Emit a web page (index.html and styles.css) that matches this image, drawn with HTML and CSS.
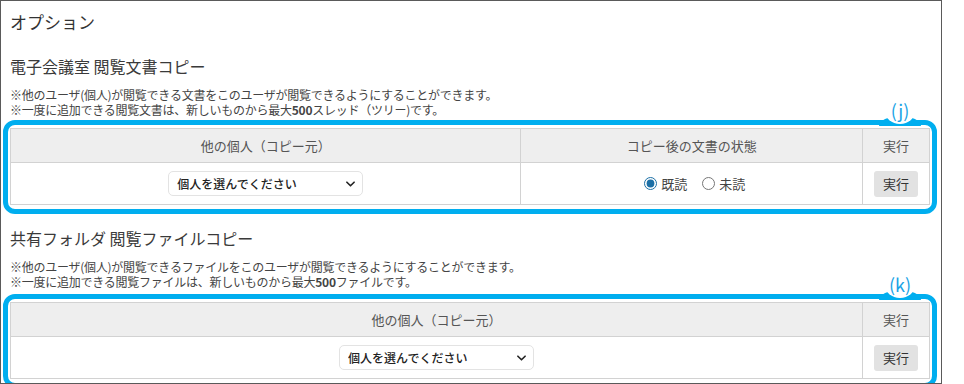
FILE: index.html
```html
<!DOCTYPE html>
<html lang="ja">
<head>
<meta charset="utf-8" />
<title>オプション</title>
<link rel="stylesheet" href="styles.css">
</head>
<body>
<div class="frame">
  <h1 class="page-title">オプション</h1>

  <!-- 電子会議室 -->
  <h2 class="sec-title">電子会議室 閲覧文書コピー</h2>
  <div class="note">
    <div>※他のユーザ(個人)が閲覧できる文書をこのユーザが閲覧できるようにすることができます。</div>
    <div>※一度に追加できる閲覧文書は、新しいものから最大<b>500</b>スレッド（ツリー)です。</div>
  </div>
  <div class="callout">
    <span class="tag">(j)</span>
    <table class="opt-table">
      <tr>
        <th class="c-src">他の個人（コピー元）</th>
        <th class="c-state">コピー後の文書の状態</th>
        <th class="c-run">実行</th>
      </tr>
      <tr>
        <td>
          <div class="sel">
            <select><option>個人を選んでください</option></select>
            <svg class="chev" viewBox="0 0 10 6" width="9" height="6"><polyline points="1,1 5,5 9,1" fill="none" stroke="#222" stroke-width="1.8" stroke-linecap="round" stroke-linejoin="round"/></svg>
          </div>
        </td>
        <td>
          <div class="radios">
            <label><input type="radio" name="st1" checked> 既読</label>
            <label><input type="radio" name="st1"> 未読</label>
          </div>
        </td>
        <td><button class="btn">実行</button></td>
      </tr>
    </table>
  </div>

  <!-- 共有フォルダ -->
  <h2 class="sec-title second">共有フォルダ 閲覧ファイルコピー</h2>
  <div class="note">
    <div>※他のユーザ(個人)が閲覧できるファイルをこのユーザが閲覧できるようにすることができます。</div>
    <div>※一度に追加できる閲覧ファイルは、新しいものから最大<b>500</b>ファイルです。</div>
  </div>
  <div class="callout second">
    <span class="tag">(k)</span>
    <table class="opt-table">
      <tr>
        <th>他の個人（コピー元）</th>
        <th class="c-run">実行</th>
      </tr>
      <tr>
        <td>
          <div class="sel">
            <select><option>個人を選んでください</option></select>
            <svg class="chev" viewBox="0 0 10 6" width="9" height="6"><polyline points="1,1 5,5 9,1" fill="none" stroke="#222" stroke-width="1.8" stroke-linecap="round" stroke-linejoin="round"/></svg>
          </div>
        </td>
        <td><button class="btn">実行</button></td>
      </tr>
    </table>
  </div>
</div>
</body>
</html>
```

FILE: styles.css
```css
:root{--blue:#00aeef;--line:#d2d2d2;--txt:#333}
html,body{margin:0;background:#fff;color:var(--txt);font-family:"Noto Sans CJK JP","Noto Sans",sans-serif}

/* 外枠 */
.frame{width:942px;height:384px;box-sizing:border-box;border:1px solid #5a5a5a;padding:8px 0 0 9px;overflow:hidden}

.page-title{margin:0;font-size:17px;font-weight:400;line-height:26px;color:#333}
.sec-title{margin:20px 0 0;font-size:16px;font-weight:400;line-height:22px;color:#3a3a3a}
.sec-title.second{margin-top:13px}
.note{margin:10px 0 0;font-size:12px;line-height:15px;color:#444;letter-spacing:-.25px}
.note div{height:15px}
.note b{font-weight:700}

/* 青い囲み（注釈） */
.callout{position:relative;margin:3px 0 0 -7px;width:934px;box-sizing:border-box;border:5px solid var(--blue);border-radius:12px;padding:3px 2px 4px}
.callout.second{margin-top:5px}
.tag{position:absolute;right:17px;top:-26px;width:30px;height:22px;line-height:22px;text-align:center;font-size:18px;color:#1aa3e6;z-index:2}
.tag::before{content:'';position:absolute;left:-6px;right:-6px;top:17px;height:10px;background:var(--blue);border-radius:50% 50% 0 0/100% 100% 0 0;z-index:-2}
.tag::after{content:'';position:absolute;left:0;right:0;top:0;height:25px;background:#fff;border-radius:50%;z-index:-1}

/* テーブル */
.opt-table{width:100%;border-collapse:collapse;font-size:13px}
.opt-table th,.opt-table td{border:1px solid var(--line);text-align:center;padding:0}
.opt-table th{background:#eee;color:#555;font-weight:400;height:33px}
.opt-table td{height:41px}
.c-src{width:510px}
.c-state{width:341px}
.c-run{width:66px}

/* セレクト */
.sel{position:relative;display:inline-block;vertical-align:middle}
.sel select{appearance:none;-webkit-appearance:none;width:195px;height:25px;border:1px solid #e3e3e3;border-radius:5px;background:#fff;padding:0 0 0 8px;font-family:inherit;font-size:12px;font-weight:500;color:#222;text-align:left}
.chev{position:absolute;right:8px;top:10px;pointer-events:none}

/* ラジオ */
.radios{display:inline-flex;gap:15px;align-items:center;padding-left:6px}
.radios label{display:inline-flex;align-items:center;gap:4px;font-size:13px;color:#444}
.radios input{margin:0;width:13px;height:13px;accent-color:#1b6fa6}

.btn{width:44px;height:26px;border:0;border-radius:3px;background:#e2e2e2;font-family:inherit;font-size:13px;color:#333;padding:0;vertical-align:middle}
```
